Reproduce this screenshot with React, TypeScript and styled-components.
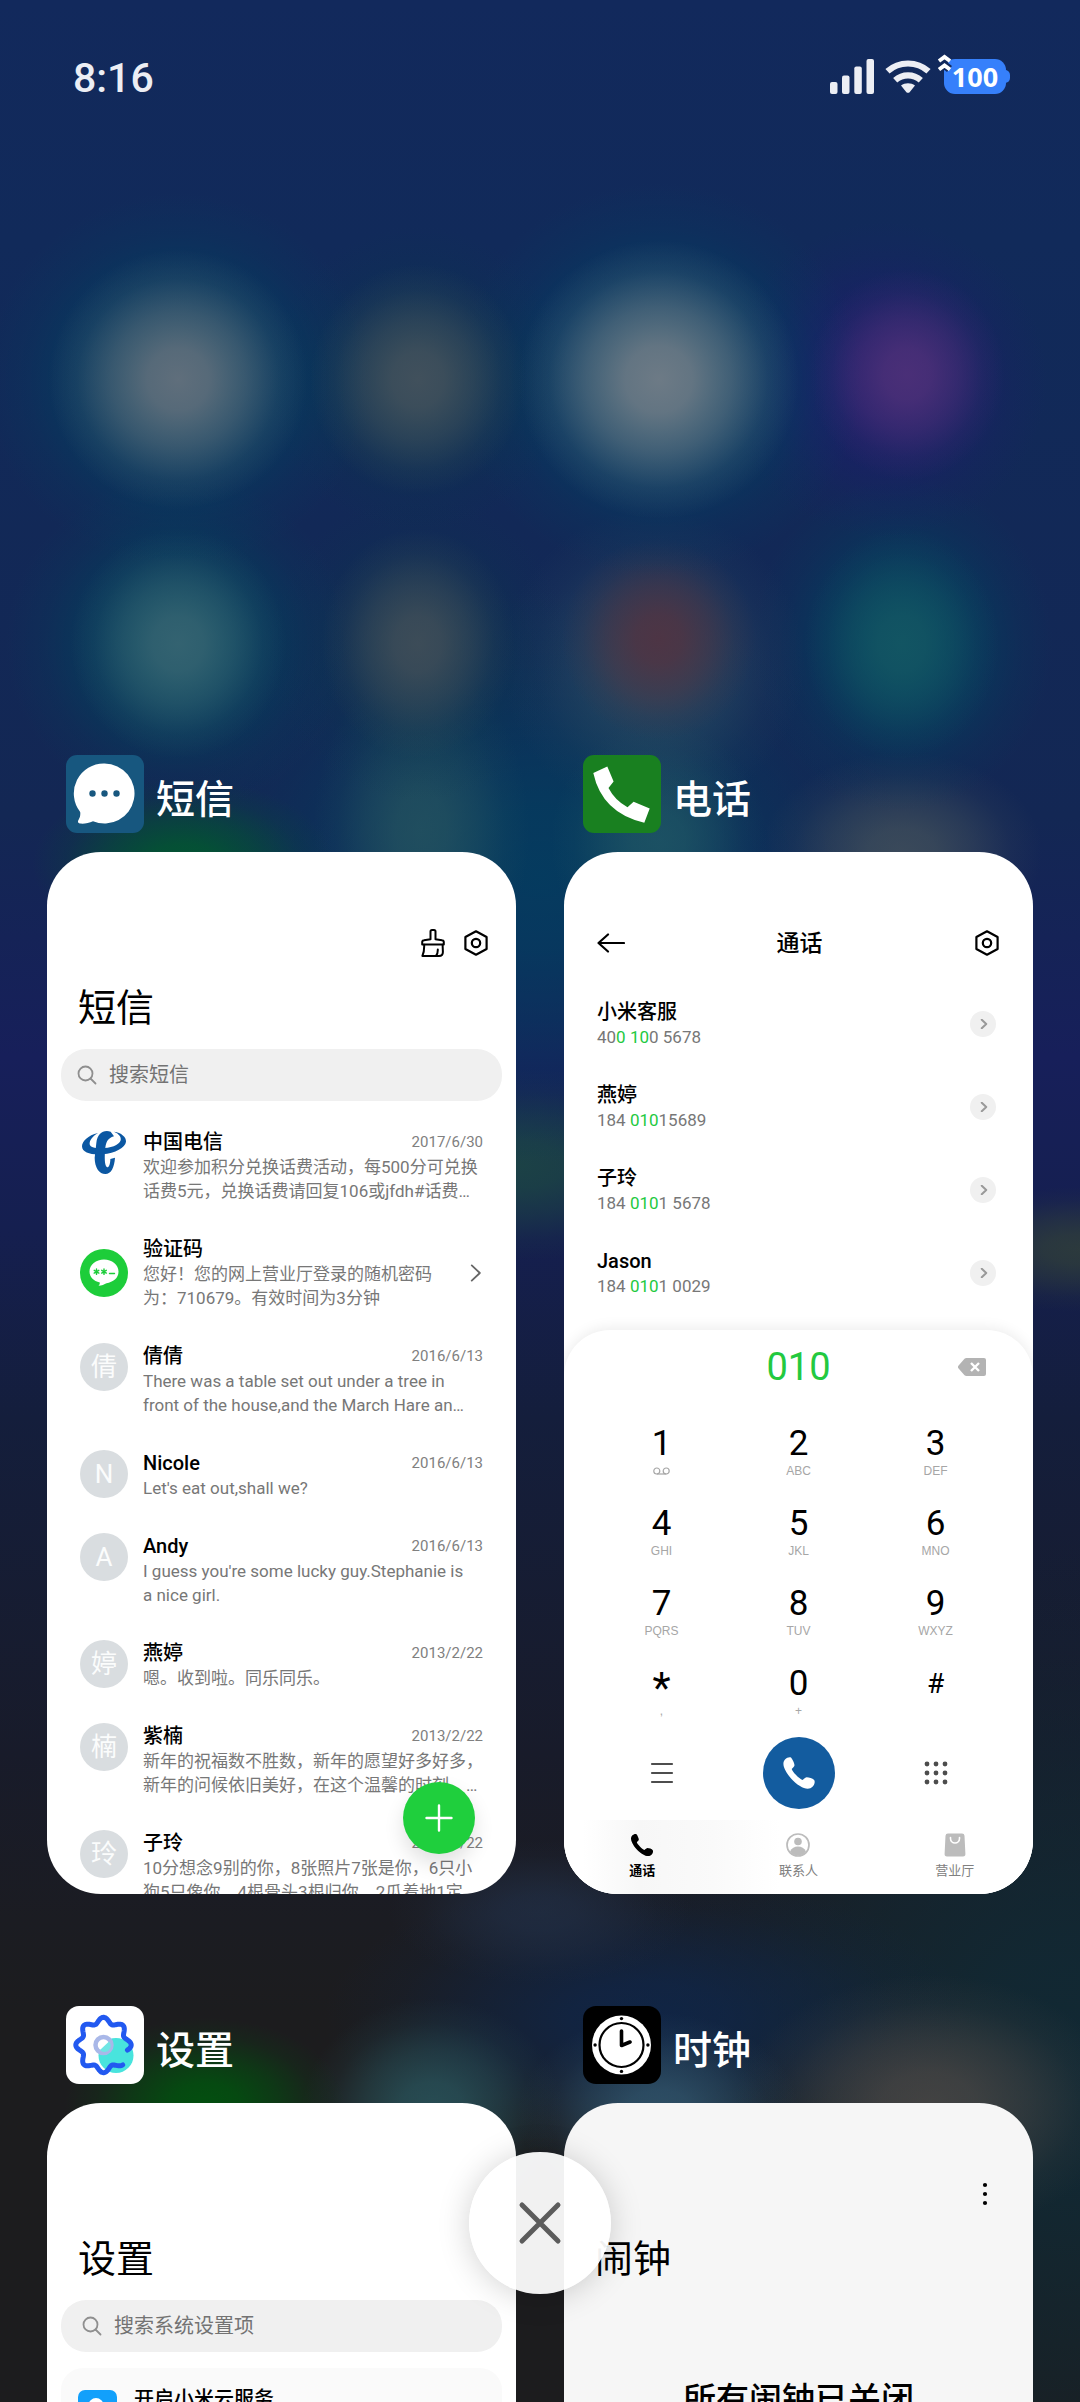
import type { ReactNode } from "react";
import styled, { createGlobalStyle, css } from "styled-components";

const GlobalStyle = createGlobalStyle`
  * {
    box-sizing: border-box;
  }
  body {
    margin: 0;
    background: #1c1c1e;
    font-family: Roboto, "Noto Sans CJK SC", sans-serif;
    color: #000;
  }
  button {
    padding: 0;
    border: 0;
    background: none;
    font: inherit;
    color: inherit;
    cursor: pointer;
  }
  svg {
    display: block;
    flex: none;
  }
`;

/* Wallpaper */

// [x%, y%, rx%, ry%, rgb, strength]
type Glow = [number, number, number, number, string, number];

const glows: Glow[] = [
  // launcher icons, first row
  [16.5, 15.8, 12, 5.4, "112,118,128", 0.85],
  [38.7, 15.8, 10, 4.8, "74,85,94", 0.85],
  [61, 15.8, 13, 5.8, "124,130,138", 0.88],
  [84, 15.6, 9, 4.4, "82,50,122", 0.85],
  [16.5, 15.8, 18, 7.8, "0,68,98", 0.95],
  [38.7, 15.8, 14, 6.4, "10,56,78", 0.8],
  [61, 15.8, 19, 8.2, "0,68,102", 0.95],
  [82, 15.8, 15, 6.6, "32,26,112", 0.75],
  // second row
  [16.5, 26.8, 10, 4.8, "60,104,116", 0.85],
  [38.7, 26.8, 9, 4.8, "72,82,90", 0.8],
  [61, 26.6, 9, 4.2, "84,50,64", 0.85],
  [83.5, 26.8, 9, 4.8, "22,90,100", 0.8],
  [16.5, 26.8, 16, 7, "0,70,94", 0.9],
  [38.7, 27, 14, 6.4, "12,56,78", 0.7],
  [60.5, 27.6, 14, 6.4, "46,78,98", 0.8],
  [83.5, 26.8, 14, 7, "0,68,96", 0.85],
  // third row, mostly hidden by the cards
  [17, 36, 14, 3.6, "0,92,44", 0.85],
  [39, 34.6, 10, 7, "42,88,96", 0.7],
  [61, 35, 10, 5, "36,92,102", 0.7],
  [83.5, 35.5, 13, 4.2, "74,88,92", 0.7],
  [50, 36.5, 34, 12, "0,66,98", 0.75],
  [48, 48.5, 18, 4, "30,80,64", 0.7],
  [100, 52, 14, 2.6, "56,72,52", 0.65],
  // between the two rows of cards
  [19, 87.6, 13, 3.6, "0,84,14", 0.9],
  [40, 87.8, 12, 4.6, "44,92,100", 0.75],
  [61, 88, 13, 4.2, "52,90,114", 0.8],
  [86, 87.6, 18, 5.4, "86,78,74", 0.7],
  [50, 79.6, 14, 3, "34,48,72", 0.7],
  [60, 84, 30, 6, "12,40,84", 0.7],
  [100, 86, 44, 22, "16,42,54", 0.9],
];

const glowLayers = glows
  .map(
    ([x, y, rx, ry, rgb, a]) =>
      `radial-gradient(${rx}% ${ry}% at ${x}% ${y}%, rgba(${rgb},${a}) 0%, rgba(${rgb},${a * 0.9}) 24%, rgba(${rgb},${a * 0.56}) 52%, rgba(${rgb},${a * 0.18}) 78%, rgba(${rgb},0) 100%)`
  )
  .join(",");

const Screen = styled.div`
  position: relative;
  height: 100vh;
  overflow: hidden;
  background: ${glowLayers},
    linear-gradient(
      180deg,
      #12295c 0%,
      #112a5a 10%,
      #132754 34%,
      #171f5a 44%,
      #151f50 51%,
      #141e3c 59%,
      #181b2a 73%,
      #1b1c22 80%,
      #1c1c1e 84%
    );
`;

const StatusBar = styled.header`
  display: flex;
  align-items: center;
  justify-content: space-between;
  padding: 52px 70px 0 73px;
  height: 100px;
  color: #eceef4;
`;

const Clock = styled.time`
  padding-top: 3px;
  font-size: 41px;
  font-weight: 500;
  line-height: 48px;
`;

const StatusIcons = styled.div`
  display: flex;
  align-items: center;
  gap: 11px;
`;

const Battery = styled.div`
  position: relative;
  display: flex;
  align-items: center;
  justify-content: center;
  width: 62px;
  height: 35px;
  margin: 0 4px 0 2px;
  border-radius: 11px;
  background: #3680fb;
  color: #fff;
  font-family: "Noto Sans", sans-serif;
  font-size: 27px;
  font-weight: 700;
  line-height: 35px;

  &::after {
    content: "";
    position: absolute;
    right: -4px;
    top: 11px;
    width: 6px;
    height: 13px;
    border-radius: 0 5px 5px 0;
    background: #3680fb;
  }
`;

const ChargeMark = styled.svg`
  position: absolute;
  left: -8px;
  top: -7px;
`;

const AppGrid = styled.main`
  display: grid;
  grid-template-columns: repeat(2, minmax(0, 1fr));
  gap: 112px 48px;
  padding: 655px 47px 0;
`;

const AppHeading = styled.div`
  display: flex;
  align-items: center;
  gap: 12px;
  padding-left: 19px;
  margin-bottom: 19px;
  color: #fff;
`;

const AppName = styled.h2`
  margin: 0;
  padding-top: 12px;
  font-size: 39px;
  font-weight: 500;
  line-height: 56px;
`;

const Preview = styled.div<{ $tone?: string }>`
  position: relative;
  display: flex;
  flex-direction: column;
  aspect-ratio: 9 / 20;
  min-height: 0;
  overflow: hidden;
  padding-top: 77px;
  border-radius: 54px;
  background: ${(p) => p.$tone || "#fff"};
`;

const Toolbar = styled.div<{ $spread?: boolean }>`
  display: flex;
  align-items: center;
  justify-content: ${(p) => (p.$spread ? "space-between" : "flex-end")};
  gap: 18px;
  height: 28px;
  flex: none;
  padding: 0 ${(p) => (p.$spread ? 33 : 27)}px;
`;

const ToolbarTitle = styled.h3`
  margin: 0;
  padding-top: 2px;
  font-size: 23px;
  font-weight: 500;
  line-height: 28px;
`;

const PageTitle = styled.h3`
  margin: 23px 31px 0;
  font-size: 38px;
  font-weight: 400;
  line-height: 56px;
`;

const SearchBox = styled.label<{ $inset?: boolean }>`
  display: flex;
  align-items: center;
  gap: 12px;
  flex: none;
  height: 52px;
  margin: 13px 14px 0;
  padding: 0 ${(p) => (p.$inset ? 21 : 16)}px;
  border-radius: 25px;
  background: #f0f0f0;
`;

const SearchInput = styled.input`
  flex: 1;
  min-width: 0;
  padding: 0;
  border: 0;
  outline: none;
  background: none;
  font: inherit;
  font-size: 20px;
  line-height: 28px;

  &::placeholder {
    color: #737373;
    opacity: 1;
  }
`;

/* Messages */

const Threads = styled.ul`
  display: flex;
  flex-direction: column;
  gap: 33px;
  flex: 1 1 0;
  min-height: 0;
  overflow: hidden;
  margin: 28px 33px 0;
  padding: 0;
  list-style: none;
`;

const Thread = styled.li<{ $centered?: boolean }>`
  display: flex;
  flex: none;
  align-items: ${(p) => (p.$centered ? "center" : "flex-start")};
  gap: 15px;
`;

const Avatar = styled.div`
  flex: none;
  width: 48px;
  height: 48px;
  border-radius: 50%;
  background: #d9dde0;
  color: #fbfcfc;
  font-size: 26px;
  line-height: 48px;
  text-align: center;
`;

const ThreadBody = styled.div`
  flex: 1;
  min-width: 0;
`;

const ThreadTop = styled.div`
  display: flex;
  align-items: center;
  justify-content: space-between;
`;

const Name = styled.div`
  font-size: 20px;
  font-weight: 500;
  line-height: 26px;
`;

const DateText = styled.time`
  color: #808080;
  font-size: 15px;
  line-height: 26px;
`;

const Snippet = styled.span`
  display: block;
  overflow: hidden;
  color: #777;
  font-size: 17px;
  line-height: 24px;
  white-space: nowrap;
`;

const ComposeButton = styled.button`
  position: absolute;
  right: 41px;
  bottom: 40px;
  display: grid;
  place-items: center;
  width: 72px;
  height: 72px;
  border-radius: 50%;
  background: #1fcf3d;
  box-shadow: 0 10px 20px rgba(0, 0, 0, 0.12);
`;

/* Phone */

const Contacts = styled.ul`
  display: flex;
  flex-direction: column;
  gap: 33px;
  flex: none;
  margin: 42px 37px 0 33px;
  padding: 0;
  list-style: none;
`;

const Contact = styled.li`
  display: flex;
  align-items: center;
  justify-content: space-between;
`;

const PhoneNumber = styled.div`
  color: #777;
  font-size: 17px;
  line-height: 24px;

  mark {
    background: none;
    color: #23c93f;
  }
`;

const DetailButton = styled.button`
  display: grid;
  place-items: center;
  width: 26px;
  height: 26px;
  border-radius: 50%;
  background: #f0f0f0;
`;

const DialSheet = styled.section`
  display: flex;
  flex-direction: column;
  flex: 1;
  min-height: 0;
  margin-top: 32px;
  border-radius: 46px 46px 0 0;
  background: #fff;
  box-shadow: 0 -2px 14px rgba(0, 0, 0, 0.08);
`;

const DialDisplay = styled.div`
  display: grid;
  grid-template-columns: 1fr auto 1fr;
  align-items: center;
  height: 74px;
  padding: 0 47px;

  output {
    grid-column: 2;
    color: #23c93f;
    font-size: 38px;
    line-height: 48px;
  }
  button {
    justify-self: end;
  }
`;

const keypadColumns = css`
  display: grid;
  grid-template-columns: repeat(3, 137px);
  justify-content: center;
  justify-items: center;
`;

const Keypad = styled.div`
  ${keypadColumns}
  row-gap: 26px;
  margin-top: 21px;
`;

const Key = styled.button`
  display: flex;
  flex-direction: column;
  align-items: center;
  width: 100%;
  height: 54px;
`;

const Digit = styled.span<{ $symbol: string }>`
  height: 38px;
  font-size: 35px;
  line-height: 38px;
  ${(p) => p.$symbol === "*" && "font-size: 42px; padding-top: 4px;"}
  ${(p) => p.$symbol === "#" && "font-size: 28px;"}
`;

const Letters = styled.span`
  display: grid;
  place-items: center;
  height: 16px;
  color: #a6a6a6;
  font-family: "Liberation Sans", sans-serif;
  font-size: 12px;
  line-height: 16px;
`;

const CallRow = styled.div`
  ${keypadColumns}
  align-items: center;
  margin-top: 18px;
`;

const CallButton = styled.button`
  display: grid;
  place-items: center;
  width: 72px;
  height: 72px;
  border-radius: 50%;
  background: #135c9f;
  color: #fff;
`;

const Tabs = styled.nav`
  display: grid;
  grid-template-columns: repeat(3, 1fr);
  margin-top: auto;
  height: 74px;
  background: linear-gradient(90deg, #fff 4%, #f7f7f7 16%, #fafafa 32%, #fff 46%);
`;

const Tab = styled.button<{ $active?: boolean }>`
  display: flex;
  flex-direction: column;
  align-items: center;
  padding-top: 13px;
  gap: 5px;
  color: ${(p) => (p.$active ? "#000" : "#808080")};
  font-size: 13px;
  font-weight: ${(p) => (p.$active ? 700 : 400)};
  line-height: 18px;
`;

/* Settings, alarms */

const SettingsGroup = styled.div`
  display: flex;
  align-items: flex-start;
  gap: 17px;
  flex: none;
  height: 100px;
  margin: 16px 14px 0;
  padding: 17px;
  border-radius: 22px;
  background: #fafafa;

  svg {
    margin-top: 5px;
  }
`;

const SettingsLabel = styled.div`
  font-size: 20px;
  font-weight: 500;
  line-height: 28px;
`;

const AlarmNotice = styled.p`
  margin: 89px 0 0;
  font-size: 33px;
  font-weight: 500;
  line-height: 48px;
  text-align: center;
`;

const CloseButton = styled.button`
  position: absolute;
  left: 50%;
  bottom: 108px;
  display: grid;
  place-items: center;
  width: 142px;
  height: 142px;
  margin-left: -71px;
  border-radius: 50%;
  background: rgba(255, 255, 255, 0.94);
  box-shadow: 0 2px 32px rgba(0, 0, 0, 0.18);
`;

/* Drawings */

const MessagesLogo = () => (
  <svg width="78" height="78" viewBox="0 0 78 78">
    <rect width="78" height="78" rx="11" fill="#17577f" />
    <path
      d="M38.500 8.500a30 30 0 1 1-11.500 57.700c-4 1.800-9 2.800-13 2.300-2.200-.3-2.600-2-1.400-3.800 1.400-2.200 2-4.700 1.600-7.700A30 30 0 0 1 38.500 8.500z"
      fill="#fff"
    />
    <g fill="#17577f">
      <circle cx="26.500" cy="38.500" r="3.200" />
      <circle cx="38.500" cy="38.500" r="3.200" />
      <circle cx="50.500" cy="38.500" r="3.200" />
    </g>
  </svg>
);

const PhoneLogo = () => (
  <svg width="78" height="78" viewBox="0 0 78 78">
    <rect width="78" height="78" rx="11" fill="#198020" />
    <path
      d="M10.300 18 24.300 11.500 30.600 26.600 25.500 33Q32 45.500 44.500 52.200L50.600 46.700 66.700 53.600 61.300 67.700Q19 58 10.300 18z"
      fill="#fff"
    />
  </svg>
);

// eight-lobed outline, left open at the lower right
const gearPath = Array.from({ length: 161 }, (_, i) => {
  const angle = ((46 + (i * 326) / 160) * Math.PI) / 180;
  const radius = 24.8 + 2.9 * Math.cos(8 * angle);
  const x = 37.5 + radius * Math.cos(angle);
  const y = 39 + radius * Math.sin(angle);
  return `${i ? "L" : "M"}${x.toFixed(2)} ${y.toFixed(2)}`;
}).join("");

const SettingsLogo = () => (
  <svg width="78" height="78" viewBox="0 0 78 78">
    <rect width="78" height="78" rx="13" fill="#fff" />
    <circle cx="50" cy="49.500" r="17.500" fill="#48e4dd" />
    <path
      d={gearPath}
      fill="none"
      stroke="#2259f0"
      strokeWidth="5"
      strokeLinecap="round"
      strokeLinejoin="round"
    />
    <circle cx="37.500" cy="39" r="8" fill="#fff" stroke="#a9b8e8" strokeWidth="4.500" />
    <path d="M34 44 43 35.500A6 6 0 0 1 34 44z" fill="#6fe6e4" />
  </svg>
);

const ClockLogo = () => (
  <svg width="78" height="78" viewBox="0 0 78 78">
    <rect width="78" height="78" rx="13" fill="#000" />
    <circle cx="38.500" cy="39" r="29.500" fill="#fff" />
    <circle cx="38.500" cy="39" r="22" fill="none" stroke="#000" strokeWidth="2.200" />
    <circle cx="38.500" cy="12.600" r="1.700" />
    <circle cx="38.500" cy="65.400" r="1.700" />
    <circle cx="12.100" cy="39" r="1.700" />
    <circle cx="64.900" cy="39" r="1.700" />
    <path
      d="M38.500 25v14.500l8.500-3.500"
      fill="none"
      stroke="#000"
      strokeWidth="3.600"
      strokeLinecap="round"
      strokeLinejoin="round"
    />
  </svg>
);

const Hexagon = () => (
  <svg width="26" height="28" viewBox="0 0 26 28" fill="none" stroke="#000" strokeWidth="2.200">
    <path
      d="M13 2.300 23.600 8v12L13 25.700 2.400 20V8z"
      strokeLinejoin="round"
    />
    <circle cx="13" cy="14" r="4.200" />
  </svg>
);

const Brush = () => (
  <svg
    width="24"
    height="28"
    viewBox="0 0 24 28"
    fill="none"
    stroke="#000"
    strokeWidth="2"
    strokeLinejoin="round"
    strokeLinecap="round"
  >
    <path d="M9.500 10.300V2.600A1.500 1.500 0 0 1 11 1.100h2a1.500 1.500 0 0 1 1.500 1.500v7.700l6.500.9a2 2 0 0 1 1.800 2v2.300H1.200v-2.300a2 2 0 0 1 1.800-2z" />
    <path d="M3.200 15.800C3.300 20 2.800 24 1.400 26.900H18c2.800 0 3.900-1.500 3.900-4l-.3-7.100M16.800 20.500c.1 3-.4 4.900-1.800 6.200" />
  </svg>
);

const SearchGlyph = () => (
  <svg width="20" height="20" viewBox="0 0 20 20" fill="none" stroke="#8f8f8f" strokeWidth="1.800">
    <circle cx="8.500" cy="8.500" r="7" />
    <path d="m13.500 13.500 5 5" strokeLinecap="round" />
  </svg>
);

const Chevron = ({ size = 20, color = "#666", weight = 2 }) => (
  <svg width={size} height={size} viewBox="0 0 20 20" fill="none" stroke={color} strokeWidth={weight}>
    <path d="m7.500 1.500 9 8.500-9 8.500" strokeLinecap="round" strokeLinejoin="round" />
  </svg>
);

const TelecomLogo = () => (
  <svg width="48" height="48" viewBox="-6 -6 144 144" fill="#0b57a2">
    <path d="M48 6C18 13 0 31 0 46c0 20 30 27 62 24 38-4 68-20 70-38 1-14-14-27-36-30 16 7 22 16 20 26-4 15-32 24-59 24-24 0-36-6-34-17 2-10 12-22 25-29z" />
    <path d="M86 2C64-5 46 8 43 36l-5 44c0 30 14 49 32 49s27-21 29-49l-14 4c0 14-4 25-9 25-7-2-9-21-7-49 2-26 7-38 27-44z" />
  </svg>
);

const CodeLogo = () => (
  <svg width="48" height="48" viewBox="0 0 48 48">
    <circle cx="24" cy="24" r="24" fill="#1dcd3a" />
    <path
      d="M24 10.500c8 0 14.500 5 14.500 12S33 33 26.500 34.200c-2 1.200-5 2.300-8 2.500 1-1 1.500-2.200 1.300-3.200C13.500 32 9.500 28 9.500 22.500c0-7 6.500-12 14.500-12z"
      fill="#fff"
    />
    <g stroke="#1dcd3a" strokeWidth="1.400" strokeLinecap="round">
      <path d="M16.500 20v5.400M14.200 21.300l4.600 2.800M18.800 21.300l-4.600 2.800" />
      <path d="M24 20v5.400M21.700 21.300l4.600 2.800M26.300 21.300l-4.600 2.800" />
      <path d="M29.500 24.500h5" />
    </g>
  </svg>
);

const Handset = ({ size }: { size: number }) => (
  <svg width={size} height={size} viewBox="-1 -1 34 34" fill="currentColor">
    <path d="M2 2.500C4 .5 7-.3 8.200.8c1.800 2.200 3.300 6.200 3.300 7.400 0 1.300-2 2.800-2.800 3.800.8 3 7.300 9.500 10.800 11 1.500-1 3-2.700 4.300-2.700 2.200 0 6.200 1.200 7.500 3 1 1.700 0 4.700-1.800 6.400-2.500 2.800-7.500 2.600-12.500-.7C11 25.500 5 19 2.200 13 0 8.500-.3 5 2 2.500z" />
  </svg>
);

const Voicemail = () => (
  <svg width="17" height="8" viewBox="0 0 17 8" fill="none" stroke="#a6a6a6" strokeWidth="1.200">
    <circle cx="3.800" cy="4" r="3" />
    <circle cx="13.200" cy="4" r="3" />
    <path d="M3.800 7h9.400" />
  </svg>
);

const dotGrid = [3, 12, 21];

type Message = {
  name: string;
  date?: string;
  lines: string[];
  logo?: ReactNode;
  initial?: string;
};

const messages: Message[] = [
  {
    name: "中国电信",
    date: "2017/6/30",
    lines: ["欢迎参加积分兑换话费活动，每500分可兑换", "话费5元，兑换话费请回复106或jfdh#话费…"],
    logo: <TelecomLogo />,
  },
  {
    name: "验证码",
    lines: ["您好！您的网上营业厅登录的随机密码", "为：710679。有效时间为3分钟"],
    logo: <CodeLogo />,
  },
  {
    name: "倩倩",
    date: "2016/6/13",
    lines: ["There was a table set out under a tree in", "front of the house,and the March Hare an…"],
    initial: "倩",
  },
  { name: "Nicole", date: "2016/6/13", lines: ["Let's eat out,shall we?"], initial: "N" },
  {
    name: "Andy",
    date: "2016/6/13",
    lines: ["I guess you're some lucky guy.Stephanie is", "a nice girl."],
    initial: "A",
  },
  { name: "燕婷", date: "2013/2/22", lines: ["嗯。收到啦。同乐同乐。"], initial: "婷" },
  {
    name: "紫楠",
    date: "2013/2/22",
    lines: ["新年的祝福数不胜数，新年的愿望好多好多，", "新年的问候依旧美好，在这个温馨的时刻，…"],
    initial: "楠",
  },
  {
    name: "子玲",
    date: "2013/2/22",
    lines: ["10分想念9别的你，8张照片7张是你，6只小", "狗5只像你，4根骨头3根归你，2瓜着地1定"],
    initial: "玲",
  },
];

// number split around the matched digits
const contacts = [
  { name: "小米客服", number: ["40", "0 10", "0 5678"] },
  { name: "燕婷", number: ["184 ", "010", "15689"] },
  { name: "子玲", number: ["184 ", "010", "1 5678"] },
  { name: "Jason", number: ["184 ", "010", "1 0029"] },
];

const keys: [string, ReactNode][] = [
  ["1", <Voicemail />],
  ["2", "ABC"],
  ["3", "DEF"],
  ["4", "GHI"],
  ["5", "JKL"],
  ["6", "MNO"],
  ["7", "PQRS"],
  ["8", "TUV"],
  ["9", "WXYZ"],
  ["*", ","],
  ["0", "+"],
  ["#", ""],
];

function AppCard({
  logo,
  name,
  tone,
  children,
}: {
  logo: ReactNode;
  name: string;
  tone?: string;
  children: ReactNode;
}) {
  return (
    <article>
      <AppHeading>
        {logo}
        <AppName>{name}</AppName>
      </AppHeading>
      <Preview $tone={tone}>{children}</Preview>
    </article>
  );
}

function MessagesApp() {
  return (
    <AppCard logo={<MessagesLogo />} name="短信">
      <Toolbar>
        <button aria-label="清理">
          <Brush />
        </button>
        <button aria-label="设置">
          <Hexagon />
        </button>
      </Toolbar>
      <PageTitle>短信</PageTitle>
      <SearchBox>
        <SearchGlyph />
        <SearchInput type="text" placeholder="搜索短信" aria-label="搜索短信" />
      </SearchBox>
      <Threads>
        {messages.map((m) => (
          <Thread key={m.name} $centered={!m.date}>
            {m.logo || <Avatar>{m.initial}</Avatar>}
            <ThreadBody>
              <ThreadTop>
                <Name>{m.name}</Name>
                {m.date && <DateText>{m.date}</DateText>}
              </ThreadTop>
              {m.lines.map((line) => (
                <Snippet key={line}>{line}</Snippet>
              ))}
            </ThreadBody>
            {!m.date && <Chevron size={18} weight={2} />}
          </Thread>
        ))}
      </Threads>
      <ComposeButton aria-label="新建短信">
        <svg width="28" height="28" viewBox="0 0 28 28" stroke="#fff" strokeWidth="2.400" strokeLinecap="round">
          <path d="M14 1.500v25M1.500 14h25" />
        </svg>
      </ComposeButton>
    </AppCard>
  );
}

function PhoneApp() {
  return (
    <AppCard logo={<PhoneLogo />} name="电话">
      <Toolbar $spread>
        <button aria-label="返回">
          <svg width="28" height="20" viewBox="0 0 28 20" fill="none" stroke="#000" strokeWidth="2.200">
            <path d="M11 1.500 1.500 10l9.500 8.500M1.500 10H27" strokeLinecap="round" strokeLinejoin="round" />
          </svg>
        </button>
        <ToolbarTitle>通话</ToolbarTitle>
        <button aria-label="设置">
          <Hexagon />
        </button>
      </Toolbar>
      <Contacts>
        {contacts.map(({ name, number }) => (
          <Contact key={name}>
            <div>
              <Name>{name}</Name>
              <PhoneNumber>
                {number[0]}
                <mark>{number[1]}</mark>
                {number[2]}
              </PhoneNumber>
            </div>
            <DetailButton aria-label={name}>
              <Chevron size={10} color="#999" weight={4} />
            </DetailButton>
          </Contact>
        ))}
      </Contacts>
      <DialSheet>
        <DialDisplay>
          <output>010</output>
          <button aria-label="删除">
            <svg width="28" height="18" viewBox="0 0 28 18">
              <path d="M8.500 0H26a2 2 0 0 1 2 2v14a2 2 0 0 1-2 2H8.500a3 3 0 0 1-2-.8L.6 10.400a2 2 0 0 1 0-2.800L6.500.8a3 3 0 0 1 2-.8z" fill="#b3b3b3" />
              <path d="m13 5 8 8m0-8-8 8" stroke="#fff" strokeWidth="2.400" />
            </svg>
          </button>
        </DialDisplay>
        <Keypad>
          {keys.map(([digit, letters]) => (
            <Key key={digit}>
              <Digit $symbol={digit}>{digit}</Digit>
              <Letters>{letters}</Letters>
            </Key>
          ))}
        </Keypad>
        <CallRow>
          <button aria-label="菜单">
            <svg width="24" height="22" viewBox="0 0 24 22" stroke="#4d4d4d" strokeWidth="2.200" strokeLinecap="round">
              <path d="M2 2h20M2 11h20M2 20h20" />
            </svg>
          </button>
          <CallButton aria-label="拨打">
            <Handset size={34} />
          </CallButton>
          <button aria-label="拨号盘">
            <svg width="24" height="24" viewBox="0 0 24 24" fill="#4d4d4d">
              {dotGrid.map((y) => dotGrid.map((x) => <circle key={`${x}-${y}`} cx={x} cy={y} r="2.400" />))}
            </svg>
          </button>
        </CallRow>
        <Tabs>
          <Tab $active>
            <Handset size={24} />
            通话
          </Tab>
          <Tab>
            <svg width="24" height="24" viewBox="0 0 24 24" fill="#bcbcbc">
              <circle cx="12" cy="12" r="11" fill="none" stroke="#bcbcbc" strokeWidth="1.700" />
              <circle cx="12" cy="8.500" r="3.800" />
              <path d="M4 18.600c1.600-3.400 4.600-5 8-5s6.400 1.600 8 5a10 10 0 0 1-16 0z" />
            </svg>
            联系人
          </Tab>
          <Tab>
            <svg width="24" height="24" viewBox="0 0 24 24" fill="#bcbcbc">
              <path d="M5 .5h14a2.500 2.500 0 0 1 2.500 2.300l.9 18A2.500 2.500 0 0 1 20 23.500H4a2.500 2.500 0 0 1-2.400-2.700l.9-18A2.500 2.500 0 0 1 5 .5z" />
              <path d="M7.500 4.500v1a4.500 4.500 0 0 0 9 0v-1" fill="none" stroke="#fff" strokeWidth="1.600" strokeLinecap="round" />
            </svg>
            营业厅
          </Tab>
        </Tabs>
      </DialSheet>
    </AppCard>
  );
}

function SettingsApp() {
  return (
    <AppCard logo={<SettingsLogo />} name="设置">
      <Toolbar />
      <PageTitle>设置</PageTitle>
      <SearchBox $inset>
        <SearchGlyph />
        <SearchInput type="text" placeholder="搜索系统设置项" aria-label="搜索系统设置项" />
      </SearchBox>
      <SettingsGroup>
        <svg width="39" height="39" viewBox="0 0 39 39">
          <rect width="39" height="39" rx="7" fill="#12a0fb" />
          <circle cx="18" cy="15.500" r="7.500" fill="#fff" />
          <rect x="6" y="15" width="27" height="15" rx="7.500" fill="#fff" />
        </svg>
        <SettingsLabel>开启小米云服务</SettingsLabel>
      </SettingsGroup>
    </AppCard>
  );
}

function ClockApp() {
  return (
    <AppCard logo={<ClockLogo />} name="时钟" tone="#f6f6f6">
      <Toolbar>
        <button aria-label="更多">
          <svg width="42" height="24" viewBox="0 0 42 24">
            <circle cx="21" cy="3" r="2.100" />
            <circle cx="21" cy="12" r="2.100" />
            <circle cx="21" cy="21" r="2.100" />
          </svg>
        </button>
      </Toolbar>
      <PageTitle>闹钟</PageTitle>
      <AlarmNotice>所有闹钟已关闭</AlarmNotice>
    </AppCard>
  );
}

function App() {
  return (
    <>
      <GlobalStyle />
      <Screen>
        <StatusBar>
          <Clock>8:16</Clock>
          <StatusIcons>
            <svg width="44" height="35" viewBox="0 0 44 35" fill="currentColor">
              <rect x="0" y="23" width="7.500" height="12" rx="2" />
              <rect x="12" y="16.500" width="7.500" height="18.500" rx="2" />
              <rect x="24.300" y="7.500" width="7.500" height="27.500" rx="2" />
              <rect x="36.500" y="0" width="7.500" height="35" rx="2" />
            </svg>
            <svg width="46" height="35" viewBox="0 0 46 35" fill="none" stroke="currentColor" strokeWidth="6.200">
              <path d="M2.500 12.300C14 1.900 32 1.900 43.500 12.300" />
              <path d="M10.200 21.300c7.400-6.600 18.200-6.600 25.600 0" />
              <path d="M16 26.600c4-3.200 10-3.200 14 0l-5.200 6.300a2.300 2.300 0 0 1-3.600 0z" fill="currentColor" stroke="none" />
            </svg>
            <Battery>
              100
              <ChargeMark width="18" height="22" viewBox="0 0 18 22">
                <path
                  d="m3.500 9 5-4 5 4M3.500 17l5-4 5 4"
                  fill="none"
                  stroke="#12295c"
                  strokeWidth="8"
                />
                <path d="m3 9 5.500-4 5.500 4M3 17.500l5.500-4 5.500 4" fill="none" stroke="#fff" strokeWidth="4" />
              </ChargeMark>
            </Battery>
          </StatusIcons>
        </StatusBar>
        <AppGrid>
          <MessagesApp />
          <PhoneApp />
          <SettingsApp />
          <ClockApp />
        </AppGrid>
        <CloseButton aria-label="全部清除">
          <svg width="46" height="46" viewBox="0 0 46 46" stroke="#5c5c5c" strokeWidth="5" strokeLinecap="round">
            <path d="m5 5 36 36M41 5 5 41" />
          </svg>
        </CloseButton>
      </Screen>
    </>
  );
}

export default App;
